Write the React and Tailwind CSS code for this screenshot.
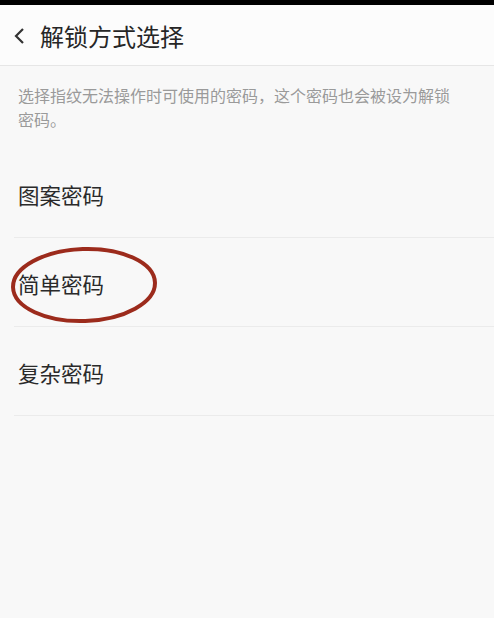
import React from "react";

const font = { fontFamily: '"Noto Sans CJK SC", "Noto Sans", sans-serif' };

function Row({ label, children }) {
  return (
    <div className="relative ml-[14px] flex h-[89px] items-center border-b border-[#ebebeb] pt-[5px]">
      <span className="pl-[4px] text-[21.5px] text-[#2a2a2a]">{label}</span>
      {children}
    </div>
  );
}

export default function App() {
  return (
    <div className="flex h-[618px] w-[500px] bg-white" style={font}>
      <div className="flex w-[494px] flex-col bg-[#f8f8f8]">
        <div className="h-[5px] bg-black" />
        <header className="flex h-[61px] items-center border-b border-[#e6e6e6] bg-[#fcfcfc] pt-[2px]">
          <svg className="ml-[13px]" width="12" height="18" viewBox="0 0 12 18">
            <path d="M10 2 L3 9 L10 16" fill="none" stroke="#333" strokeWidth="2.2" />
          </svg>
          <h1 className="ml-[15px] text-[24px] leading-none text-[#262626]">解锁方式选择</h1>
        </header>
        <p className="px-[18px] pt-[17px] text-[16px] leading-[24px] text-[#9a9a9a]">
          选择指纹无法操作时可使用的密码，这个密码也会被设为解锁
          <br />
          密码。
        </p>
        <div className="mt-[18px] flex flex-col">
          <Row label="图案密码" />
          <Row label="简单密码">
            <svg
              className="pointer-events-none absolute left-[-5px] top-[7px]"
              width="152"
              height="80"
              viewBox="0 0 152 80"
            >
              <ellipse
                cx="75"
                cy="40"
                rx="71"
                ry="36"
                transform="rotate(-2 75 40)"
                fill="none"
                stroke="#9c2b1c"
                strokeWidth="4"
              />
            </svg>
          </Row>
          <Row label="复杂密码" />
        </div>
      </div>
    </div>
  );
}
